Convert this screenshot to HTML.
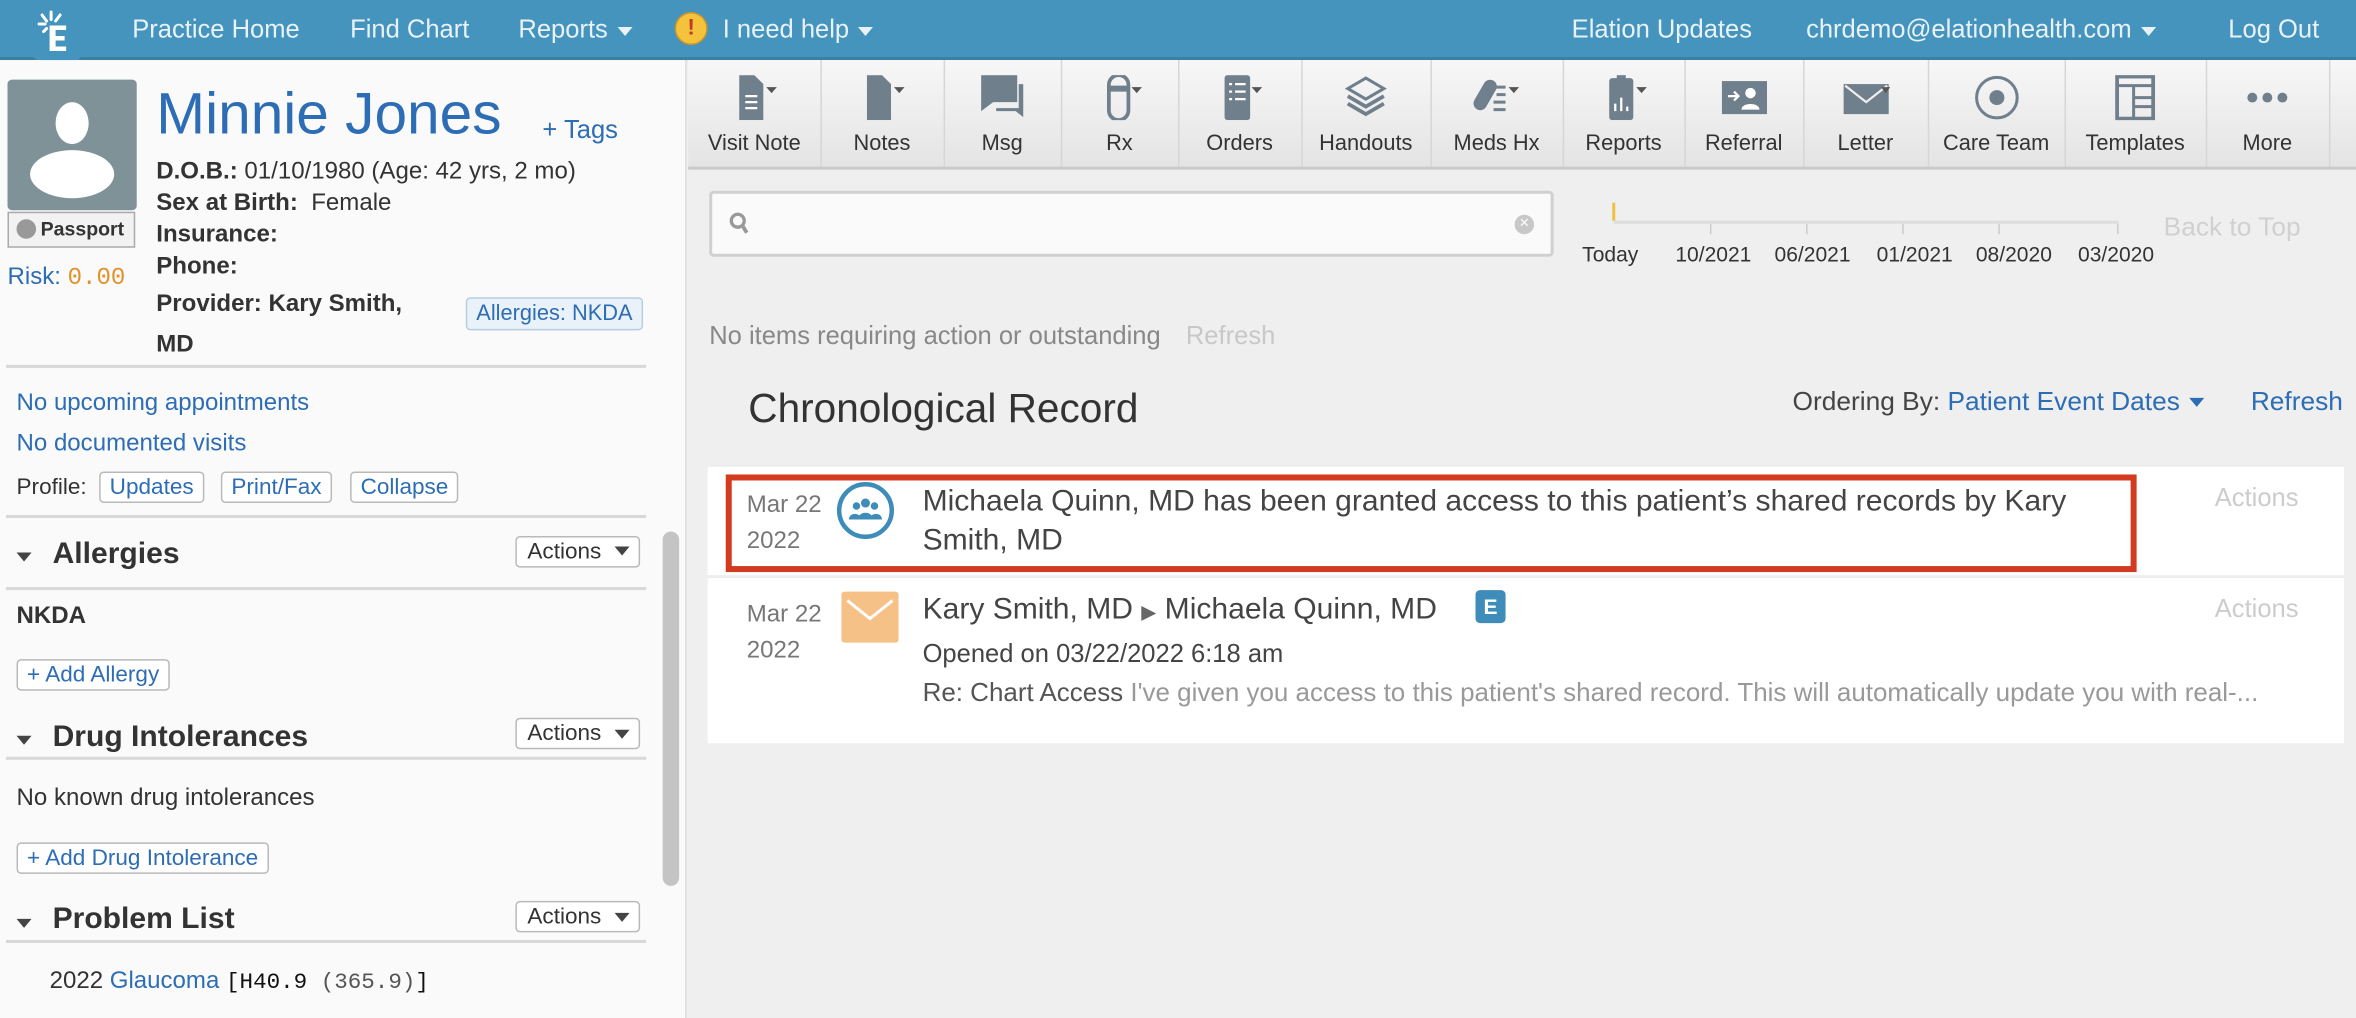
<!DOCTYPE html>
<html><head><meta charset="utf-8"><style>
html,body{margin:0;padding:0;width:2356px;height:1018px;overflow:hidden;background:#efefef}
#w{position:absolute;left:0;top:0;width:1568px;height:678px;transform:scale(1.50255,1.5015);transform-origin:0 0;font-family:"Liberation Sans",sans-serif;color:#333}
.a{position:absolute;white-space:nowrap}
#top{left:0;top:0;width:1568px;height:38px;background:#4594bd;border-bottom:2px solid #3b7fa3}
.nav{color:#e8f2f8;font-size:17px;top:10px}
.car{display:inline-block;width:0;height:0;border-left:5px solid transparent;border-right:5px solid transparent;border-top:6px solid #e8f2f8;vertical-align:middle;margin-left:6px}
#left{left:0;top:40px;width:456px;height:638px;background:#fafafa;border-right:1px solid #ddd}
.blue{color:#2d6db5}
.btn{position:absolute;border:1px solid #b9b9b9;border-radius:3px;background:#fff;font-size:15px;padding:1px 6px;white-space:nowrap}
.sec{font-size:20px;font-weight:bold;color:#333}
.tri{position:absolute;width:0;height:0;border-left:5px solid transparent;border-right:5px solid transparent;border-top:6px solid #444}
.hr{position:absolute;height:2px;background:#d8d8d8}
#tb{left:458px;top:40px;width:1110px;height:71px;background:linear-gradient(#f7f7f7,#e4e4e4);border-bottom:2px solid #c9c9c9}
.tbb{position:absolute;top:0;height:71px;border-right:1px solid #d6d6d6;text-align:center;font-size:14.5px;color:#333}
.tbb span{position:absolute;left:0;right:0;top:48px}
.ic{position:absolute;top:10px;left:50%;margin-left:-16px;width:32px;height:30px}
.rc{color:#444;font-size:20px}
.tl{position:absolute;top:161px;font-size:14px}
</style></head><body><div id="w">
<div id="top" class="a"></div>
<div class="a" style="left:14px;top:-4px;width:48px;height:48px;border-radius:50%;background:#4594bd"></div>
<svg class="a" style="left:24px;top:6px" width="28" height="30" viewBox="0 0 28 30"><g stroke="#fff" stroke-width="2" stroke-linecap="round"><line x1="10" y1="2" x2="10" y2="7"/><line x1="4" y1="4" x2="7" y2="8"/><line x1="16" y1="4" x2="13" y2="8"/><line x1="2" y1="10" x2="6" y2="10"/><line x1="5" y1="15" x2="7" y2="13"/></g><path d="M9 11h11v3h-7v4h6v3h-6v4h7v3H9z" fill="#fff"/></svg>
<div class="a nav" style="left:88px">Practice Home</div>
<div class="a nav" style="left:233px">Find Chart</div>
<div class="a nav" style="left:345px">Reports<span class="car"></span></div>
<div class="a" style="left:449px;top:8px;width:20px;height:20px;border-radius:50%;background:#f5c33b;border:1px solid #c9952b;color:#c0392b;font-weight:bold;font-size:15px;text-align:center;line-height:20px">!</div>
<div class="a nav" style="left:481px">I need help<span class="car"></span></div>
<div class="a nav" style="left:1046px">Elation Updates</div>
<div class="a nav" style="left:1202px">chrdemo@elationhealth.com<span class="car"></span></div>
<div class="a nav" style="left:1483px">Log Out</div>

<div id="left" class="a"></div>
<div class="a" style="left:5px;top:53px;width:86px;height:87px;background:#7f9298;border-radius:3px;overflow:hidden"><div class="a" style="left:32px;top:15px;width:22px;height:28px;border-radius:50%;background:#fff"></div><div class="a" style="left:15px;top:47px;width:56px;height:32px;border-radius:50%;background:#fff"></div></div>
<div class="a" style="left:5px;top:141px;width:83px;height:22px;border:1px solid #aaa;background:#f2f2f2;font-size:13px;font-weight:bold;line-height:22px"><span style="display:inline-block;width:13px;height:13px;border-radius:50%;background:#999;margin:0 3px 0 5px;vertical-align:-2px"></span>Passport</div>
<div class="a" style="left:5px;top:176px;font-size:16px"><span class="blue">Risk: </span><span style="font-family:'Liberation Mono',monospace;color:#e0922a">0.00</span></div>
<div class="a blue" style="left:104px;top:55px;font-size:39px">Minnie Jones</div>
<div class="a blue" style="left:361px;top:77px;font-size:17px">+ Tags</div>
<div class="a" style="left:104px;top:104px;font-size:16px;line-height:21px"><b>D.O.B.:</b> 01/10/1980 (Age: 42 yrs, 2 mo)<br><b>Sex at Birth:</b>&nbsp; Female<br><b>Insurance:</b><br><b>Phone:</b></div>
<div class="a" style="left:104px;top:189px;font-size:16px;line-height:27px;font-weight:bold">Provider: Kary Smith,<br>MD</div>
<div class="a blue" style="left:310px;top:198px;border:1px solid #b8cde0;background:#e9f1f9;border-radius:3px;font-size:14.5px;padding:2px 6px">Allergies: NKDA</div>
<div class="hr" style="left:4px;top:243px;width:426px"></div>
<div class="a blue" style="left:11px;top:255px;font-size:16px;line-height:27px">No upcoming appointments<br>No documented visits</div>
<div class="a" style="left:11px;top:316px;font-size:15px">Profile:</div>
<div class="btn blue" style="left:66px;top:314px">Updates</div>
<div class="btn blue" style="left:147px;top:314px">Print/Fax</div>
<div class="btn blue" style="left:233px;top:314px">Collapse</div>
<div class="hr" style="left:4px;top:343px;width:426px"></div>
<div class="a" style="left:441px;top:354px;width:11px;height:236px;border-radius:6px;background:#c4c4c4"></div>
<div class="tri" style="left:11px;top:368px"></div><div class="a sec" style="left:35px;top:358px">Allergies</div>
<div class="btn" style="left:343px;top:357px;padding:1px 25px 1px 7px">Actions</div><div class="tri" style="left:409px;top:364px"></div>
<div class="hr" style="left:4px;top:391px;width:426px"></div>
<div class="a" style="left:11px;top:402px;font-size:16px;font-weight:bold">NKDA</div>
<div class="btn blue" style="left:11px;top:439px">+ Add Allergy</div>
<div class="tri" style="left:11px;top:490px"></div><div class="a sec" style="left:35px;top:480px">Drug Intolerances</div>
<div class="btn" style="left:343px;top:478px;padding:1px 25px 1px 7px">Actions</div><div class="tri" style="left:409px;top:486px"></div>
<div class="hr" style="left:4px;top:504px;width:426px"></div>
<div class="a" style="left:11px;top:523px;font-size:16px">No known drug intolerances</div>
<div class="btn blue" style="left:11px;top:561px">+ Add Drug Intolerance</div>
<div class="tri" style="left:11px;top:612px"></div><div class="a sec" style="left:35px;top:601px">Problem List</div>
<div class="btn" style="left:343px;top:600px;padding:1px 25px 1px 7px">Actions</div><div class="tri" style="left:409px;top:608px"></div>
<div class="hr" style="left:4px;top:626px;width:426px"></div>
<div class="a" style="left:33px;top:645px;font-size:16px">2022 <span class="blue">Glaucoma</span> <span style="font-family:'Liberation Mono',monospace;font-size:15px;color:#111">[H40.9 <span style="color:#555">(365.9)</span>]</span></div>

<div id="tb" class="a"></div>
<div class="a" style="left:458px;top:40px;width:1110px;height:71px">
<div class="tbb" style="left:0;width:88px"><svg class="ic" viewBox="0 0 32 30"><path d="M6 0h10l6 6v24H6z" fill="#6f7f8c"/><path d="M10 14h8M10 18h8M10 22h8" stroke="#fff" stroke-width="1.5"/><path d="M24 8h7l-3.5 4z" fill="#555"/></svg><span>Visit Note</span></div>
<div class="tbb" style="left:88px;width:82px"><svg class="ic" viewBox="0 0 32 30"><path d="M6 0h10l6 6v24H6z" fill="#6f7f8c"/><path d="M24 8h7l-3.5 4z" fill="#555"/></svg><span>Notes</span></div>
<div class="tbb" style="left:170px;width:78px"><svg class="ic" viewBox="0 0 32 30"><path d="M2 0h24v18H10l-8 6z" fill="#6f7f8c"/><path d="M27 6h3v22l-5-4H12v-2h15z" fill="#6f7f8c"/></svg><span>Msg</span></div>
<div class="tbb" style="left:248px;width:78px"><svg class="ic" viewBox="0 0 32 30"><rect x="9" y="0" width="13" height="30" rx="6.5" fill="none" stroke="#6f7f8c" stroke-width="2.5"/><path d="M9 7h13v4H9z" fill="#6f7f8c"/><path d="M24 8h7l-3.5 4z" fill="#555"/></svg><span>Rx</span></div>
<div class="tbb" style="left:326px;width:82px"><svg class="ic" viewBox="0 0 32 30"><rect x="6" y="0" width="17" height="30" rx="2" fill="#6f7f8c"/><path d="M9 6h2M13 6h7M9 11h2M13 11h7M9 16h2M13 16h7" stroke="#fff" stroke-width="1.5"/><path d="M24 8h7l-3.5 4z" fill="#555"/></svg><span>Orders</span></div>
<div class="tbb" style="left:408px;width:86px"><svg class="ic" viewBox="0 0 32 30"><path d="M16 2l12 7-12 7L4 9z" fill="none" stroke="#6f7f8c" stroke-width="2"/><path d="M4 14l12 7 12-7M4 19l12 7 12-7" fill="none" stroke="#6f7f8c" stroke-width="2.5"/></svg><span>Handouts</span></div>
<div class="tbb" style="left:494px;width:88px"><svg class="ic" viewBox="0 0 32 30"><rect x="4" y="2" width="9" height="22" rx="4.5" transform="rotate(30 8 13)" fill="#6f7f8c"/><path d="M16 8h6M16 13h6M14 18h8M14 23h8" stroke="#6f7f8c" stroke-width="2"/><path d="M24 8h7l-3.5 4z" fill="#555"/></svg><span>Meds Hx</span></div>
<div class="tbb" style="left:582px;width:81px"><svg class="ic" viewBox="0 0 32 30"><rect x="6" y="2" width="16" height="28" rx="2" fill="#6f7f8c"/><rect x="11" y="0" width="6" height="4" fill="#6f7f8c"/><path d="M10 24v-5M14 24v-9M18 24v-3" stroke="#fff" stroke-width="1.5"/><path d="M24 8h7l-3.5 4z" fill="#555"/></svg><span>Reports</span></div>
<div class="tbb" style="left:663px;width:79px"><svg class="ic" viewBox="0 0 32 30"><rect x="1" y="4" width="30" height="22" fill="#6f7f8c"/><circle cx="20" cy="12" r="3.5" fill="#fff"/><path d="M14 23c0-5 12-5 12 0z" fill="#fff"/><path d="M5 14h6M9 11l3 3-3 3" stroke="#fff" stroke-width="1.5" fill="none"/></svg><span>Referral</span></div>
<div class="tbb" style="left:742px;width:83px"><svg class="ic" viewBox="0 0 32 30"><rect x="1" y="6" width="30" height="20" fill="#6f7f8c"/><path d="M2 7l14 11 14-11" stroke="#eee" stroke-width="1.5" fill="none"/><path d="M26 8h6l-3 4z" fill="#555"/></svg><span>Letter</span></div>
<div class="tbb" style="left:825px;width:91px"><svg class="ic" viewBox="0 0 32 30"><circle cx="16" cy="15" r="13.5" fill="none" stroke="#6f7f8c" stroke-width="2"/><circle cx="16" cy="15" r="5" fill="#6f7f8c"/></svg><span>Care Team</span></div>
<div class="tbb" style="left:916px;width:94px"><svg class="ic" viewBox="0 0 32 30"><rect x="4" y="1" width="24" height="28" fill="none" stroke="#6f7f8c" stroke-width="2.5"/><path d="M4 7h24M15 7v22M15 15h13M15 21h13" stroke="#6f7f8c" stroke-width="2"/></svg><span>Templates</span></div>
<div class="tbb" style="left:1010px;width:82px"><svg class="ic" viewBox="0 0 32 30"><circle cx="6" cy="15" r="3.3" fill="#6f7f8c"/><circle cx="16" cy="15" r="3.3" fill="#6f7f8c"/><circle cx="26" cy="15" r="3.3" fill="#6f7f8c"/></svg><span>More</span></div>
</div>

<div class="a" style="left:472px;top:127px;width:562px;height:44px;background:#fafafa;border:2px solid #d0d0d0;border-radius:3px;box-sizing:border-box"></div>
<svg class="a" style="left:485px;top:141px" width="14" height="16"><circle cx="6" cy="6" r="4.3" fill="none" stroke="#999" stroke-width="2.2"/><line x1="9" y1="9" x2="12" y2="14" stroke="#999" stroke-width="2.5"/></svg>
<div class="a" style="left:1008px;top:143px;width:13px;height:13px;border-radius:50%;background:#c8c8c8;color:#fff;font-size:11px;line-height:13px;text-align:center">×</div>
<div class="a" style="left:1074px;top:147px;width:336px;height:2px;background:#ddd"></div>
<div class="a" style="left:1073px;top:135px;width:2px;height:12px;background:#f0c040"></div>
<div class="a" style="left:1138px;top:149px;width:1px;height:7px;background:#ccc"></div><div class="a" style="left:1202px;top:149px;width:1px;height:7px;background:#ccc"></div><div class="a" style="left:1266px;top:149px;width:1px;height:7px;background:#ccc"></div><div class="a" style="left:1330px;top:149px;width:1px;height:7px;background:#ccc"></div><div class="a" style="left:1409px;top:149px;width:1px;height:7px;background:#ccc"></div>
<div class="tl" style="left:1053px">Today</div><div class="tl" style="left:1115px">10/2021</div><div class="tl" style="left:1181px">06/2021</div><div class="tl" style="left:1249px">01/2021</div><div class="tl" style="left:1315px">08/2020</div><div class="tl" style="left:1383px">03/2020</div>
<div class="a" style="left:1440px;top:141px;font-size:17.5px;color:#d0d0d0">Back to Top</div>
<div class="a" style="left:472px;top:214px;font-size:17px;color:#888">No items requiring action or outstanding <span style="color:#c8c8c8;margin-left:12px">Refresh</span></div>
<div class="a" style="left:498px;top:257px;font-size:27px;color:#333">Chronological Record</div>
<div class="a" style="left:1193px;top:257px;font-size:17.5px;color:#444">Ordering By: <span class="blue">Patient Event Dates</span><span class="car" style="border-top-color:#2d6db5"></span></div>
<div class="a blue" style="left:1498px;top:257px;font-size:17.5px">Refresh</div>

<div class="a" style="left:471px;top:311px;width:1089px;height:184px;background:#fff"></div>
<div class="a" style="left:471px;top:383px;width:1089px;height:2px;background:#eee"></div>
<div class="a" style="left:483px;top:316px;width:931px;height:57px;border:4px solid #d33b20"></div>
<div class="a" style="left:497px;top:325px;font-size:16px;color:#777;line-height:24px">Mar 22<br>2022</div>
<div class="a" style="left:557px;top:321px;width:38px;height:38px;border-radius:50%;border:3px solid #3e8cba;box-sizing:border-box;background:#fff"><svg width="32" height="32" viewBox="0 0 32 32"><circle cx="16" cy="11" r="3" fill="#3e8cba"/><circle cx="10" cy="13" r="2.5" fill="#3e8cba"/><circle cx="22" cy="13" r="2.5" fill="#3e8cba"/><path d="M11 22c0-6 10-6 10 0zM5 22c0-5 8-5 8 0zM19 22c0-5 8-5 8 0z" fill="#3e8cba"/></svg></div>
<div class="a rc" style="left:614px;top:321px;line-height:26px">Michaela Quinn, MD has been granted access to this patient’s shared records by Kary<br>Smith, MD</div>
<div class="a" style="left:1474px;top:322px;font-size:17px;color:#ccc">Actions</div>
<div class="a" style="left:497px;top:398px;font-size:16px;color:#777;line-height:24px">Mar 22<br>2022</div>
<div class="a" style="left:560px;top:394px;width:38px;height:34px;background:#f6c187;border-radius:2px"><svg width="38" height="34"><path d="M4 6l15 12 15-12" stroke="#fff" stroke-width="2" fill="none"/></svg></div>
<div class="a rc" style="left:614px;top:395px">Kary Smith, MD <span style="font-size:13px;color:#666">▶</span> Michaela Quinn, MD</div>
<div class="a" style="left:982px;top:393px;width:20px;height:22px;background:#3e8cba;border-radius:3px;color:#fff;font-weight:bold;font-size:14px;text-align:center;line-height:22px">E</div>
<div class="a" style="left:614px;top:426px;font-size:17px;color:#444">Opened on 03/22/2022 6:18 am</div>
<div class="a" style="left:614px;top:451px;font-size:17.3px;color:#999"><span style="color:#555">Re: Chart Access</span> I've given you access to this patient's shared record. This will automatically update you with real-...</div>
<div class="a" style="left:1474px;top:396px;font-size:17px;color:#ccc">Actions</div>
</div></body></html>
